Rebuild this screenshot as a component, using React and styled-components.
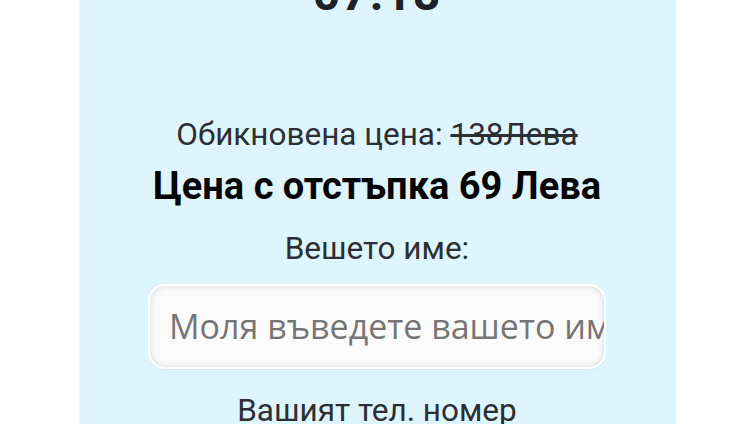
import React from "react";
import styled, { createGlobalStyle } from "styled-components";

const GlobalStyle = createGlobalStyle`
  html, body {
    margin: 0;
    padding: 0;
    background: #ffffff;
    height: 424px;
    overflow: hidden;
  }
  body {
    font-family: Roboto, "Liberation Sans", sans-serif;
  }
`;

const Page = styled.div`
  display: flex;
  justify-content: center;
  height: 424px;
  overflow: hidden;
`;

const Panel = styled.section`
  width: 597px;
  background: #dff5fd;
  display: flex;
  flex-direction: column;
  align-items: center;
  margin-top: -35px;
  min-height: 520px;
`;

const Timer = styled.div`
  font-size: 48px;
  line-height: 57.6px;
  font-weight: 700;
  color: #1d2228;
  letter-spacing: 1px;
  margin-bottom: 93px;
`;

const Line = styled.div`
  font-size: ${(p) => (p.$bold ? 38 : 31.5)}px;
  line-height: ${(p) => (p.$bold ? 44 : 38)}px;
  font-weight: ${(p) => (p.$bold ? 700 : 400)};
  color: ${(p) => (p.$bold ? "#050505" : "#2b2f33")};
  margin-bottom: ${(p) => p.$gap || 0}px;
  white-space: nowrap;
`;

const Old = styled.span`
  text-decoration: line-through;
`;

const NameInput = styled.input`
  box-sizing: border-box;
  width: 458px;
  height: 85px;
  border: 2px solid #ffffff;
  border-radius: 17px;
  background: #fbfbfb;
  box-shadow: inset 0 0 6px rgba(0, 0, 0, 0.16), 0 1px 1px rgba(0, 0, 0, 0.06);
  padding: 0 0 0 19px;
  font-family: "Open Sans", "Noto Sans", sans-serif;
  font-size: 34px;
  color: #333;
  outline: none;
  margin-bottom: 23px;

  &::placeholder {
    color: #757575;
  }
`;

export default function App() {
  return (
    <>
      <GlobalStyle />
      <Page>
        <Panel>
          <Timer>07:18</Timer>
          <Line $gap={10}>
            Обикновена цена: <Old>138Лева</Old>
          </Line>
          <Line $bold $gap={22}>
            Цена с отстъпка 69 Лева
          </Line>
          <Line $gap={16}>Вешето име:</Line>
          <NameInput placeholder="Моля въведете вашето име" />
          <Line>Вашият тел. номер</Line>
        </Panel>
      </Page>
    </>
  );
}
